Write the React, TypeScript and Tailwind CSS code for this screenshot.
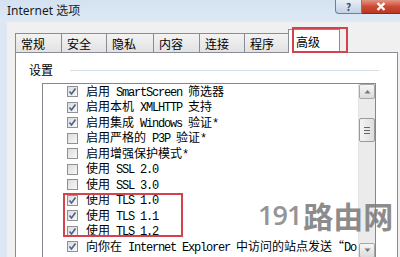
import React from 'react'

const tabs = ['常规', '安全', '隐私', '内容', '连接', '程序']
const tabWidths = ['w-[47px]', 'w-[46px]', 'w-[48px]', 'w-[47px]', 'w-[46px]', 'w-[45px]']

const items: { text: string; checked: boolean }[] = [
  { text: '启用 SmartScreen 筛选器', checked: true },
  { text: '启用本机 XMLHTTP 支持', checked: true },
  { text: '启用集成 Windows 验证*', checked: true },
  { text: '启用严格的 P3P 验证*', checked: false },
  { text: '启用增强保护模式*', checked: false },
  { text: '使用 SSL 2.0', checked: false },
  { text: '使用 SSL 3.0', checked: false },
  { text: '使用 TLS 1.0', checked: true },
  { text: '使用 TLS 1.1', checked: true },
  { text: '使用 TLS 1.2', checked: true },
  { text: '向你在 Internet Explorer 中访问的站点发送“Do Not Track”请求*', checked: true },
  { text: '允许运行或安装软件，即使签名无效', checked: false },
]

// SimSun-style mixed text: latin runs are half width (6px per char)
const mixed = (t: string) =>
  t
    .split(/([\u0000-\u00ff]+)/)
    .filter(Boolean)
    .map((s, i) =>
      /^[\u0000-\u00ff]+$/.test(s) ? (
        <span key={i} className="font-['Liberation_Mono',monospace] tracking-[-1.2px]">
          {s}
        </span>
      ) : (
        <span key={i}>{s}</span>
      )
    )

const CheckBox: React.FC<{ checked: boolean }> = ({ checked }) => (
  <div className="w-[11px] h-[11px] border border-[#8f9194] bg-gradient-to-br from-[#dcdcdc] to-[#f8f8f8] flex items-center justify-center shrink-0">
    {checked && (
      <svg width="9" height="9" viewBox="0 0 9 9">
        <path d="M1.5 4.5 L3.5 7 L7.5 1.5" fill="none" stroke="#4d5f8a" strokeWidth="1.6" />
      </svg>
    )}
  </div>
)

const App: React.FC = () => {
  return (
    <div className="w-[400px] h-[257px] overflow-hidden relative bg-[#dce7f3] flex flex-col font-['Noto_Sans_CJK_SC',sans-serif] text-[12px] text-black">
      {/* Title bar */}
      <div className="h-[22px] shrink-0 flex bg-gradient-to-b from-[#d3e2f1] to-[#dee9f5]">
        <div className="pl-[7px] flex items-center text-[12px] text-[#1b1b1b] font-['Noto_Sans','Noto_Sans_CJK_SC',sans-serif]">
          Internet 选项
        </div>
        <div className="ml-auto flex self-start">
          <div className="w-[27px] h-[14px] border border-t-0 border-[#6f7f95] rounded-bl-[4px] bg-gradient-to-b from-[#e7eef7] to-[#c2d2e6] flex items-center justify-center text-[10px] font-bold text-[#3d4a5e] leading-none">
            ?
          </div>
          <div className="w-[38px] h-[14px] border-b border-[#8a2a1c] bg-gradient-to-b from-[#e29483] via-[#cc4b36] to-[#b93622] flex items-center justify-center">
            <svg width="10" height="9" viewBox="0 0 10 9">
              <path d="M1.5 1 L8.5 8 M8.5 1 L1.5 8" stroke="#fff" strokeWidth="2.4" />
            </svg>
          </div>
        </div>
      </div>

      {/* Client area */}
      <div className="flex-1 ml-[7px] bg-[#f0f0f0] pt-[7px] flex flex-col">
        {/* Tabs */}
        <div className="h-[23px] pl-[8px] flex items-end relative z-10">
          {tabs.map((t, i) => (
            <div
              key={t}
              className={`${tabWidths[i]} h-[19px] -ml-px first:ml-0 border border-b-0 border-[#898c95] bg-gradient-to-b from-[#f3f3f3] to-[#e2e2e2] flex items-center pl-[5px] pt-[1px]`}
            >
              {t}
            </div>
          ))}
          <div className="w-[52px] h-[24px] -mb-px -ml-px border border-b-0 border-[#898c95] bg-white flex items-center pl-[7px]">
            高级
          </div>
        </div>

        {/* Tab page */}
        <div className="flex-1 ml-[8px] mr-[2px] border border-[#898c95] bg-white pt-[9px]">
          <div className="h-[16px] flex items-center pl-[13px] pr-[18px]">
            <span>设置</span>
            <div className="flex-1 h-px bg-[#d5dfe5] ml-[17px]" />
          </div>

          <div className="mt-[5px] ml-[26px] w-[334px] h-[176px] border border-[#828790] flex">
            <div className="flex-1 min-w-0 overflow-hidden">
              {items.map((it, i) => (
                <div key={i} className="h-[15.5px] flex items-center pl-[24px] whitespace-nowrap">
                  <CheckBox checked={it.checked} />
                  <span className="ml-[8px] leading-[15px]">{mixed(it.text)}</span>
                </div>
              ))}
            </div>

            {/* Scrollbar */}
            <div className="w-[17px] shrink-0 bg-[#ebebeb] border-l border-[#e3e3e3] flex flex-col">
              <div className="h-[15px] border border-[#a7a7a7] rounded-[2px] bg-gradient-to-b from-[#f6f6f6] to-[#dcdcdc] flex items-center justify-center">
                <svg width="7" height="5" viewBox="0 0 7 5">
                  <path d="M0.5 4.5 L3.5 1 L6.5 4.5" fill="#777" />
                </svg>
              </div>
              <div className="flex-1 pt-[19px]">
                <div className="h-[24px] border border-[#9a9a9a] rounded-[2px] bg-gradient-to-r from-[#f4f4f4] to-[#dedede] flex flex-col items-center justify-center gap-[2px]">
                  <div className="w-[6px] h-px bg-[#666]" />
                  <div className="w-[6px] h-px bg-[#666]" />
                  <div className="w-[6px] h-px bg-[#666]" />
                </div>
              </div>
              <div className="h-[15px] border border-[#a7a7a7] rounded-[2px] bg-gradient-to-b from-[#f6f6f6] to-[#dcdcdc] flex items-center justify-center">
                <svg width="7" height="5" viewBox="0 0 7 5">
                  <path d="M0.5 0.5 L3.5 4 L6.5 0.5" fill="#777" />
                </svg>
              </div>
            </div>
          </div>
        </div>
      </div>

      {/* Annotation boxes */}
      <div className="absolute left-[292px] top-[27px] w-[56px] h-[26px] border-2 border-[#d4434d] z-20" />
      <div className="absolute left-[63px] top-[193px] w-[120px] h-[44px] border-2 border-[#d4434d] z-20" />

      {/* Watermark */}
      <div className="absolute left-[258px] top-[200px] flex items-end leading-none z-30 opacity-90">
        <span className="text-[27px] font-semibold text-[#8a8a8a] font-['Open_Sans',sans-serif] tracking-[-1px] mb-[2px]">191</span>
        <span className="text-[30px] font-bold text-[#808080] ml-[2px]">路由网</span>
      </div>
    </div>
  )
}

export default App
